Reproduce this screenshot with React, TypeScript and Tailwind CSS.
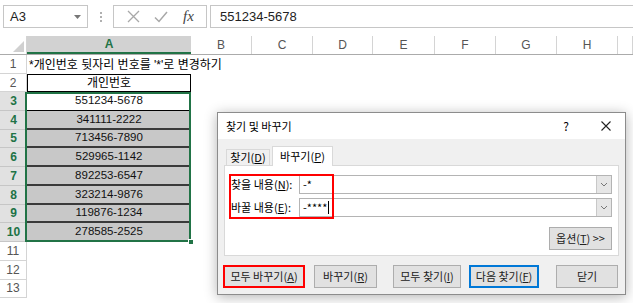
import { ReactNode } from "react"

const cols = [
    { l: "A", w: 164 },
    { l: "B", w: 61 },
    { l: "C", w: 61 },
    { l: "D", w: 60 },
    { l: "E", w: 62 },
    { l: "F", w: 61 },
    { l: "G", w: 61 },
    { l: "H", w: 61 },
    { l: "", w: 15 },
]

const data = [
    "551234-5678",
    "341111-2222",
    "713456-7890",
    "529965-1142",
    "892253-6547",
    "323214-9876",
    "119876-1234",
    "278585-2525",
]

function Key({ k }: { k: string }) {
    return <>(<span className="underline">{k}</span>)</>
}

function Btn({ children, w, cls = "" }: { children: ReactNode; w: number; cls?: string }) {
    return (
        <div
            className={`h-[23px] flex items-center justify-center bg-[#e1e1e1] border text-[11px] text-[#222] ${cls}`}
            style={{ width: w }}
        >
            {children}
        </div>
    )
}

function Combo({ value, cursor = false }: { value: string; cursor?: boolean }) {
    return (
        <div className="ml-auto w-[313px] h-[19px] bg-white border border-[#b4b4b4] flex items-center">
            <span className="pl-[3px] text-[11px] text-black leading-none">{value}</span>
            {cursor && <span className="w-px h-[13px] bg-black ml-px" />}
            <div className="ml-auto w-[15px] h-full bg-[#e6e6e6] border-l border-[#c8c8c8] flex items-center justify-center">
                <svg width="8" height="5" viewBox="0 0 8 5"><path d="M1 1l3 3 3-3" fill="none" stroke="#777" strokeWidth="1" /></svg>
            </div>
        </div>
    )
}

export default function App() {
    return (
        <div className="relative w-[633px] h-[303px] bg-white overflow-hidden font-['Liberation_Sans','Noto_Sans_CJK_KR',sans-serif] text-[#222]">
            {/* formula bar */}
            <div className="h-[36px] flex items-start pt-[5px]">
                <div className="ml-[3px] w-[85px] h-[23px] border border-[#c6c6c6] flex items-center pl-[6px] pr-[6px]">
                    <span className="text-[13px]">A3</span>
                    <svg className="ml-auto" width="7" height="4" viewBox="0 0 7 4"><path d="M0 0h7L3.5 4z" fill="#777" /></svg>
                </div>
                <div className="ml-[12px] mt-[7px] flex flex-col gap-[2px]">
                    <span className="w-[2px] h-[2px] bg-[#b0b0b0]" />
                    <span className="w-[2px] h-[2px] bg-[#b0b0b0]" />
                    <span className="w-[2px] h-[2px] bg-[#b0b0b0]" />
                </div>
                <div className="ml-[11px] w-[94px] h-[23px] border border-[#c6c6c6] flex items-center">
                    <svg className="ml-[13px]" width="13" height="13" viewBox="0 0 13 13"><path d="M1 1l11 11M12 1L1 12" stroke="#a8a8a8" strokeWidth="1.3" /></svg>
                    <svg className="ml-[14px]" width="14" height="12" viewBox="0 0 14 12"><path d="M1 6.5l4 4L13 1" fill="none" stroke="#a8a8a8" strokeWidth="1.5" /></svg>
                    <span className="ml-[15px] text-[15px] italic font-['Liberation_Serif',serif] text-[#444]">fx</span>
                </div>
                <div className="ml-[3px] flex-1 h-[23px] border border-[#c6c6c6] border-r-0 flex items-center pl-[9px]">
                    <span className="text-[13px]">551234-5678</span>
                </div>
            </div>

            {/* column header */}
            <div className="flex h-[19px] border-b border-[#ababab]">
                <div className="w-[27px] shrink-0 border-r border-[#d4d4d4] relative">
                    <svg className="absolute right-[2px] bottom-[2px]" width="11" height="11" viewBox="0 0 11 11"><path d="M11 0v11H0z" fill="#d0d0d0" /></svg>
                </div>
                {cols.map((c) =>
                    c.l === "A" ? (
                        <div key="A" className="shrink-0 bg-[#d2d2d2] border-b-2 border-[#217346] flex items-center justify-center text-[12px] text-[#217346] font-semibold" style={{ width: c.w }}>A</div>
                    ) : (
                        <div key={c.l + c.w} className="shrink-0 border-r border-[#d4d4d4] flex items-center justify-center text-[12px] text-[#555]" style={{ width: c.w }}>{c.l}</div>
                    )
                )}
            </div>

            {/* row 1 */}
            <div className="flex h-[19px]">
                <div className="w-[27px] shrink-0 border-r border-b border-[#d4d4d4] flex items-center justify-center text-[12px] text-[#555]">1</div>
                <div className="pl-[2px] flex items-center text-[12px] text-black whitespace-nowrap">*개인번호 뒷자리 번호를 '*'로 변경하기</div>
            </div>
            {/* row 2 */}
            <div className="flex h-[18px]">
                <div className="w-[27px] shrink-0 border-r border-b border-[#d4d4d4] flex items-center justify-center text-[12px] text-[#555]">2</div>
                <div className="w-[164px] border border-black bg-white flex items-center justify-center text-[12px] text-black">개인번호</div>
            </div>
            {/* rows 3-10 */}
            <div className="flex">
                <div className="w-[27px] shrink-0 flex flex-col">
                    {data.map((_, i) => (
                        <div key={i} className="h-[18.75px] bg-[#e1e1e1] border-b border-[#c6c6c6] flex items-center justify-center text-[12px] font-bold text-[#217346]">{i + 3}</div>
                    ))}
                </div>
                <div className="relative w-[164px] flex flex-col">
                    {data.map((d, i) => (
                        <div key={d} className={`h-[18.75px] flex items-center justify-center text-[11.5px] text-[#111] ${i === 0 ? "bg-white border-b border-black" : "bg-[#c8c8c8] border-b-2 border-[#3a3a3a]"} ${i === data.length - 1 ? "border-b-0" : ""}`}>{d}</div>
                    ))}
                    <div className="absolute -left-[2px] top-0 right-0 bottom-0 border-2 border-[#217346]" />
                    <span className="absolute -right-[3px] -bottom-[3px] w-[6px] h-[6px] bg-[#217346] border border-white" />
                </div>
            </div>
            {/* rows 11-13 */}
            {[11, 12, 13].map((n) => (
                <div key={n} className="flex h-[18.75px]">
                    <div className="w-[27px] shrink-0 border-r border-b border-[#d4d4d4] flex items-center justify-center text-[12px] text-[#555]">{n}</div>
                </div>
            ))}

            {/* find & replace dialog */}
            <div className="absolute left-[217px] top-[112px] w-[409px] h-[183px] bg-[#f0f0f0] border border-[#8c8c8c] shadow-[0_2px_12px_rgba(0,0,0,0.3)] flex flex-col font-['Noto_Sans_CJK_KR',sans-serif]">
                <div className="h-[26px] bg-white flex items-center pl-[8px] text-[11px] text-black">
                    <span>찾기 및 바꾸기</span>
                    <span className="ml-auto text-[12px] mr-[32px]">?</span>
                    <svg className="mr-[14px]" width="10" height="10" viewBox="0 0 10 10"><path d="M0.5 0.5l9 9M9.5 0.5l-9 9" stroke="#222" strokeWidth="1.1" /></svg>
                </div>
                <div className="ml-[6px] mt-[7px] w-[395px]">
                    <div className="flex items-end h-[19px]">
                        <div className="ml-[2px] w-[44px] h-[16px] border border-b-0 border-[#d9d9d9] flex items-center justify-center text-[11px] text-black">찾기<Key k="D" /></div>
                        <div className="ml-[2px] w-[61px] h-[20px] -mb-px bg-white border border-b-0 border-[#d9d9d9] flex items-center justify-center text-[11px] text-black relative z-10">바꾸기<Key k="P" /></div>
                    </div>
                    <div className="relative h-[91px] bg-white border border-[#d9d9d9] px-[6px] pt-[9px] text-[11px] text-black">
                        <div className="flex items-center h-[19px]">
                            <span>찾을 내용<Key k="N" />:</span>
                            <Combo value="-*" />
                        </div>
                        <div className="flex items-center h-[19px] mt-[4px]">
                            <span>바꿀 내용<Key k="E" />:</span>
                            <Combo value="-****" cursor />
                        </div>
                        <div className="flex justify-end mt-[10px]">
                            <Btn w={63} cls="border-[#adadad]">옵션<Key k="T" />&nbsp;&gt;&gt;</Btn>
                        </div>
                        <div className="absolute left-[4px] top-[8px] w-[105px] h-[45px] border-2 border-[#ff0000]" />
                    </div>
                </div>
                <div className="flex mt-[9px] ml-[5px]">
                    <Btn w={82} cls="border-2 border-[#ff0000]">모두 바꾸기<Key k="A" /></Btn>
                    <Btn w={63} cls="ml-[9px] border-[#adadad]">바꾸기<Key k="R" /></Btn>
                    <Btn w={68} cls="ml-[16px] border-[#adadad]">모두 찾기<Key k="I" /></Btn>
                    <Btn w={70} cls="ml-[8px] border-2 border-[#0078d7]">다음 찾기<Key k="F" /></Btn>
                    <Btn w={62} cls="ml-[17px] border-[#adadad]">닫기</Btn>
                </div>
            </div>
        </div>
    )
}
